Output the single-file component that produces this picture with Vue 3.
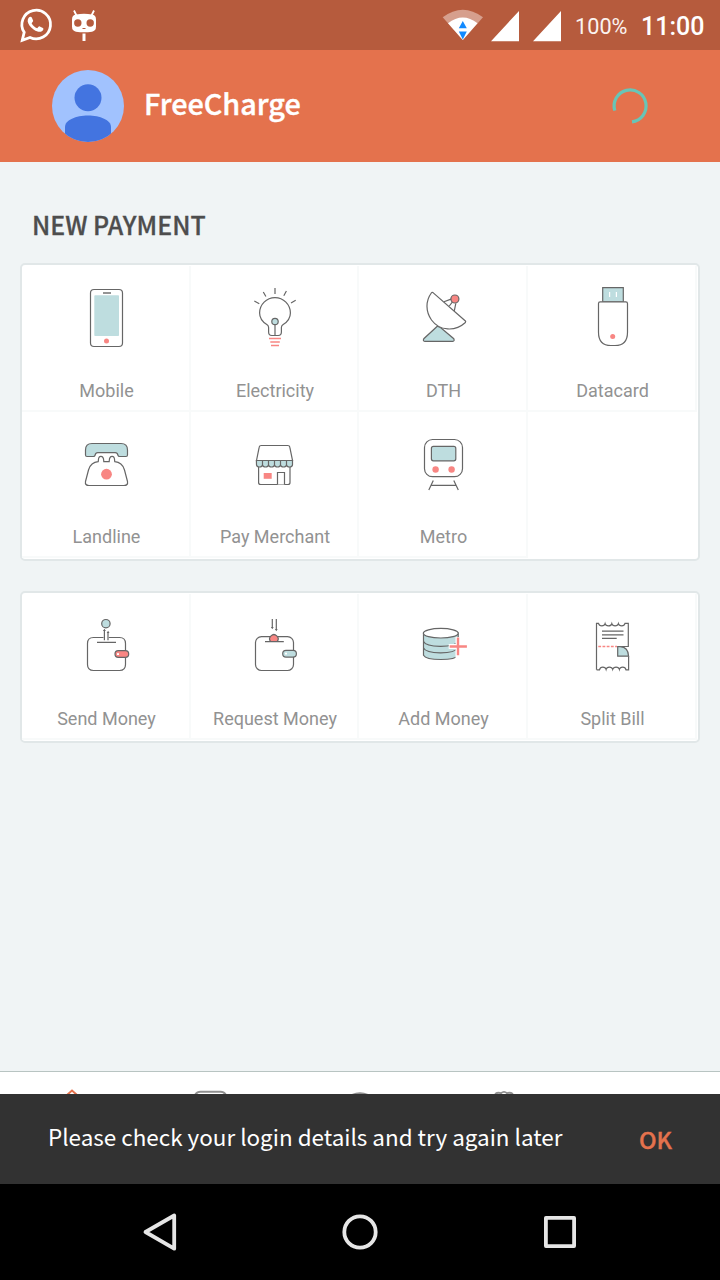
<script setup>
const quickPay = [
  { id: 'mobile', label: 'Mobile', box: '74 280 65 70' },
  { id: 'electricity', label: 'Electricity', box: '243 280 65 70' },
  { id: 'dth', label: 'DTH', box: '411 280 65 70' },
  { id: 'datacard', label: 'Datacard', box: '580 280 65 70' },
  { id: 'landline', label: 'Landline', box: '74 426 65 70' },
  { id: 'merchant', label: 'Pay Merchant', box: '243 426 65 70' },
  { id: 'metro', label: 'Metro', box: '411 426 65 70' },
]
const transfers = [
  { id: 'send', label: 'Send Money', box: '74 608 65 70' },
  { id: 'request', label: 'Request Money', box: '243 608 65 70' },
  { id: 'add', label: 'Add Money', box: '411 608 65 70' },
  { id: 'split', label: 'Split Bill', box: '580 608 65 70' },
]
const groups = [quickPay, transfers]
</script>

<template>
  <div class="screen">
    <div class="status">
      <svg class="notif" viewBox="0 0 110 50" width="110" height="50">
        <path d="M22.300 40.200 24.200 32.300A14.300 14.300 0 1 1 30 37.400Z" fill="none" stroke="#fff" stroke-width="2.800" />
        <path d="M28.500 18c1.200-1.500 2.800-1.500 3.400-.2l1.200 2.800c.2.700-.2 1.300-1.500 2.700 1.300 2.500 3.200 4.100 5.600 5 1.200-1.300 1.800-2.300 2.600-1.900l3.100 1.500c.9.500.5 2.200-.7 3.100-2.200 1.600-5 .8-8.300-1.300-3.500-2.300-5.800-5.600-6.200-8.200-.1-1.400.2-2.600.8-3.500Z" fill="#fff" />
        <path d="M74 10.500l2.500 5M94 10.500l-2.500 5" stroke="#fff" stroke-width="1.800" fill="none" />
        <path d="M82.500 33.500h3v7.500h-3z" fill="#fff" />
        <path d="M76 14.500q8-1.400 16 0 4 .7 4 5v7q0 4.500-4 5.200-8 1-16 0-4-.7-4-5.200v-7q0-4.300 4-5Z" fill="#fff" />
        <circle cx="77.800" cy="23" r="3.700" fill="#b65b3d" /><circle cx="90.200" cy="23" r="3.700" fill="#b65b3d" />
        <path d="M82.500 28.500h3" stroke="#b65b3d" stroke-width="1" />
      </svg>
      <svg class="signals" viewBox="440 0 124 50" width="124" height="50">
        <path d="M462.800 40 442.700 17.300Q462.800 2.200 483 17.300Z" fill="#d69f8d" />
        <path d="M462.800 40 448 23.300Q462.800 11.500 477.500 23.300Z" fill="#fff" />
        <path d="M462.800 21l4 7.300h-8zM458.800 31.500h8l-4 8z" fill="#118aff" />
        <path d="M491 41.200 519 11v30.200zM533 41.200 561 11v30.200z" fill="#fff" />
      </svg>
      <span class="battery">100%</span>
      <span class="clock">11:00</span>
    </div>

    <header class="header">
      <svg class="avatar" viewBox="52 70 72 72" width="72" height="72">
        <clipPath id="face"><circle cx="88" cy="106" r="36" /></clipPath>
        <g clip-path="url(#face)">
          <path d="M52 70h72v72H52z" fill="#a1c2fe" />
          <circle cx="88" cy="97.700" r="13.500" fill="#4374e0" />
          <path d="M65 145V127C65 120 76 115.500 88 115.500S111 120 111 127v18Z" fill="#4374e0" />
        </g>
      </svg>
      <h1>FreeCharge</h1>
      <svg class="spinner" viewBox="610 86 40 40" width="40" height="40">
        <path d="M614.800 110.600A16 16 0 1 1 632 121.800" fill="none" stroke="#67c5b7" stroke-width="3.200" />
      </svg>
    </header>

    <main>
      <h2>NEW PAYMENT</h2>
      <section v-for="(group, g) in groups" :key="g" class="card">
        <div v-for="item in group" :key="item.id" class="cell">
          <svg class="icon" :viewBox="item.box" width="65" height="70">
            <g v-if="item.id === 'mobile'">
              <rect x="90.500" y="289.500" width="32" height="57" rx="3.500" />
              <rect class="teal flat" x="94.300" y="295.300" width="24.700" height="40.700" rx=".8" />
              <path d="M103 293h8" stroke-width="1.800" stroke="#888" />
              <circle class="red flat" cx="106.500" cy="341" r="2.500" />
            </g>
            <g v-else-if="item.id === 'electricity'">
              <path d="M268.600 332v-4.500q0-1.700-1.800-2.900C262 321.500 259.600 318 259.600 313A15.400 15.400 0 0 1 290.400 313C290.400 318 288 321.500 283.200 324.600q-1.800 1.200-1.800 2.900v4.500q0 3.500-3.200 3.500h-6.400q-3.200 0-3.200-3.500Z" />
              <path d="M275 325v10.500M275 288v6M263.300 292l2.600 4.500M254.300 301l5 2.700M286.400 291l-2.600 4.700M295.700 300.300l-4.700 2.700" />
              <circle class="teal" cx="275" cy="321.500" r="3.200" />
              <path class="redline" d="M269 338.500h12M270.300 342h9.500M271 345.500h8" stroke-width="1.400" />
            </g>
            <g v-else-if="item.id === 'dth'">
              <path class="teal" d="M437.300 326.300 423.800 338.700q-1.200 2.600 1 2.600h28q2 0 1-2.600L440.500 327.500Z" />
              <path d="M444 301.800l7-2.700M449.300 306l3.200-4.200M454.300 310.800l1.500-7.500" />
              <path d="M433 292.600 465.400 321q.6.700 0 1.500C455 332 439.500 331 431.500 320 425.500 311.500 425.500 301 431.300 293q.7-1 1.700-.4Z" />
              <circle class="red" cx="454.900" cy="299" r="4" />
            </g>
            <g v-else-if="item.id === 'datacard'">
              <path class="teal" d="M602.700 287.600h20.600v14.200h-20.600z" />
              <path d="M609.600 292v5M616.400 292v5" stroke="#fff" stroke-width="1.200" />
              <path d="M600.200 301.800h25.600q1.700 0 1.700 1.700v28.700q0 13.300-12.500 13.300h-4q-12.500 0-12.500-13.300v-28.700q0-1.700 1.700-1.700Z" />
              <circle class="red flat" cx="612.700" cy="336.400" r="2.500" />
            </g>
            <g v-else-if="item.id === 'landline'">
              <path class="teal" d="M85.500 455v-5q0-6.500 6.500-6.500h29q6.500 0 6.500 6.500v5q0 1.500-1.500 1.500h-6.500q-1.200 0-1.700-1.500-.4-2.300-2.500-2.300h-17.600q-2.100 0-2.500 2.300-.5 1.500-1.700 1.500h-6.500q-1.500 0-1.500-1.500Z" />
              <path d="M98.200 461.700c.5-1.500-.5-5.300 2.700-5.300s2.700 3.800 2.900 5.300h5.400c.2-1.500-.3-5.300 2.900-5.300s2.200 3.800 2.700 5.300c5.700.3 8.200 3.300 9.700 8.300l3 11.500q.7 4-3.500 4H89q-4.200 0-3.500-4l3-11.500c1.500-5 4-8 9.700-8.300Z" />
              <circle class="red flat" cx="106.500" cy="474.200" r="5.400" />
            </g>
            <g v-else-if="item.id === 'merchant'">
              <path d="M258.600 467v15.500q0 2 2 2h27.400q2 0 2-2V467" />
              <path d="M256.500 460.500 259.200 447.200q.3-1.700 2-1.700h26.600q1.700 0 2 1.700l2.700 13.300Z" />
              <path class="teal" d="M256.400 460.500h36.100v4.300q-.4 2.200-3 2.200t-3-2.200q-.4 2.200-3 2.200t-3-2.200q-.4 2.200-3 2.200t-3-2.200q-.4 2.200-3 2.200t-3-2.200q-.4 2.200-3 2.200t-3-2.200q-.4 2.200-3 2.200t-3-2.200ZM262.500 460.500v4.300M268.500 460.500v4.300M274.500 460.500v4.300M280.500 460.500v4.300M286.500 460.500v4.300" />
              <path class="red flat" d="M263.700 473h8v5.800h-8z" />
              <path d="M277.500 484.500v-12h7v12" />
            </g>
            <g v-else-if="item.id === 'metro'">
              <rect x="424.500" y="439.500" width="38" height="37.200" rx="8" />
              <rect class="teal" x="431.400" y="446.400" width="24.400" height="14.400" rx="2" />
              <circle class="red flat" cx="435.600" cy="469.500" r="3.200" /><circle class="red flat" cx="451.600" cy="469.500" r="3.200" />
              <path d="M433.300 480.500l-4.500 9.400M453.800 480.500l4.500 9.400M431.500 485.400h24.400" />
            </g>
            <g v-else-if="item.id === 'send'">
              <path d="M103.500 637.500H93.500q-6 0-6 6v21q0 6 6 6h26q6 0 6-6v-21q0-6-6-6h-10.700" />
              <path d="M97 642.400h19M104.400 640.300V630M108 640.300V632" />
              <path d="M102.900 631l1.500-2.200 1.500 2.200zM106.700 633l1.400-2.200 1.400 2.200z" class="dark" />
              <circle class="teal" cx="105.900" cy="623.700" r="4.200" />
              <rect class="red" x="115" y="650.700" width="13.700" height="6.700" rx="3.300" />
              <rect x="117" y="653.200" width="2" height="1.800" class="white" />
            </g>
            <g v-else-if="item.id === 'request'">
              <rect x="255.500" y="636.600" width="38" height="33.900" rx="6" />
              <path class="red" d="M270.600 641.500a4.200 4.200 0 1 1 6.600 0Z" />
              <path d="M265 641.700h18.800M272.300 619v9M276.300 619v11" />
              <path d="M270.900 627h2.800l-1.400 2.300zM274.900 629h2.800l-1.400 2.300z" class="dark" />
              <rect class="teal" x="282.700" y="650.400" width="13.700" height="6.700" rx="3.300" />
              <rect x="285" y="652.700" width="2" height="1.800" class="white" />
            </g>
            <g v-else-if="item.id === 'add'">
              <path class="teal" d="M423.500 633v22.300c3 5.600 31.500 5.600 34.700 0V633Z" />
              <path class="line" d="M423.500 641.500c3 6.200 30 6.600 34.700 0M423.500 648c3 6.200 30 6.600 34.700 0" />
              <ellipse cx="440.800" cy="633.200" rx="17.400" ry="4.800" />
              <path d="M448.700 646.500h18M458 637v21" stroke="#fff" stroke-width="5" />
              <path class="redline" d="M449.700 646.500h17.200M458 637.500v17.700" stroke-width="2.400" />
            </g>
            <g v-else>
              <path d="M596.500 669.800V623.300h2q.6 2.600 3.300 2.600t3.300-2.200q.6 2.200 3.300 2.200t3.400-2.200q.6 2.200 3.300 2.200t3.300-2.200q.6 2.200 3.300 2.200t3.300-2.600h3.300V646.500h-8" />
              <path d="M628.600 656.200v13.600h-2.600q-.6-2.600-3.300-2.600t-3.300 2.200q-.6-2.200-3.300-2.200t-3.400 2.200q-.6-2.200-3.300-2.200t-3.300 2.200q-.6-2.200-3.300-2.200t-3.300 2.600h-2.900" class="line" />
              <path d="M602 631.200h21.500M602 634.800h21.500M602 638.400h14.700" />
              <path class="redline" d="M598.300 646.500h18.700" stroke-width="1.400" stroke-dasharray="2.800 1.400" />
              <path class="teal" d="M617.700 646.600h2.500q8 .4 8.400 9.600h-10.900Z" />
            </g>
          </svg>
          <span class="label">{{ item.label }}</span>
        </div>
      </section>
    </main>

    <nav class="tabs">
      <svg viewBox="0 1072 720 22" width="720" height="22" fill="none" stroke="#8f8f8f">
        <path d="M67 1095l5-4.500 5 4.500" stroke="#e4724d" stroke-width="2" />
        <path d="M194.500 1096q2-4.300 6-4.300h20q4 0 6 4.300" stroke-width="2" />
        <path d="M351 1095.500q9-4.500 18 0" stroke-width="2" />
        <path d="M495 1094q3-2 6-.8 3-2.600 6 0 3-1.200 6 .8" stroke-width="1.800" />
      </svg>
    </nav>

    <div class="snackbar">
      <span class="message">Please check your login details and try again later</span>
      <span class="ok">OK</span>
    </div>

    <footer class="softkeys">
      <svg viewBox="0 1184 720 96" width="720" height="96" fill="none" stroke="#e6e6e6" stroke-width="3.800" stroke-linejoin="round">
        <path d="M145.500 1232 174.200 1215.500v33.200Z" />
        <circle cx="360" cy="1232" r="15.700" />
        <rect x="545.900" y="1217.900" width="28.200" height="28.200" />
      </svg>
    </footer>
  </div>
</template>

<style>
body {
  background: #f0f4f5;
}
</style>

<style scoped>
.screen {
  width: 720px;
  height: 1280px;
  display: flex;
  flex-direction: column;
  overflow: hidden;
  background: #f0f4f5;
  font-family: Roboto, "Liberation Sans", sans-serif;
}
svg {
  display: block;
  flex: none;
}
.status {
  height: 50px;
  flex: none;
  display: flex;
  align-items: center;
  background: #b65b3d;
  color: #fff;
  white-space: nowrap;
}
.signals {
  margin-left: 330px;
}
.battery {
  width: 66px;
  margin-left: 11px;
  font-size: 21.7px;
  line-height: 30px;
  padding-top: 3px;
  color: #fbf3f0;
}
.clock {
  font-size: 25px;
  line-height: 30px;
  padding-top: 4px;
  font-weight: 500;
}
.header {
  height: 112px;
  flex: none;
  display: flex;
  align-items: center;
  padding: 0 70px 0 52px;
  background: #e4724d;
}
h1 {
  flex: 1;
  margin: 0 0 7px 20px;
  color: #fff;
  font: 500 28.8px/44px "Noto Sans CJK SC", sans-serif;
  -webkit-text-stroke: 0.4px #fff;
}
main {
  flex: 1;
  padding: 42px 20px 0;
}
h2 {
  margin: 0 0 19px 12px;
  color: #4d4d4d;
  font: 500 24.9px/40px "Noto Sans CJK SC", sans-serif;
  -webkit-text-stroke: 0.3px #4d4d4d;
}
.card {
  box-sizing: border-box;
  width: 680px;
  margin-bottom: 30px;
  padding: 1px 0;
  display: grid;
  grid-template-columns: 169px 168px 169px 169px;
  grid-auto-rows: 146px;
  border: 2px solid #e1e7e8;
  border-radius: 5px;
  background: #fff;
}
.cell {
  display: flex;
  flex-direction: column;
  padding-top: 14px;
  box-shadow: inset -2px -2px #f8fafa;
}
.icon {
  margin-left: 52px;
  fill: #fff;
  stroke: #666;
  stroke-width: 1.2;
}
.line {
  fill: none;
}
.teal {
  fill: #bedddf;
}
.red {
  fill: #f88683;
}
.redline {
  fill: none;
  stroke: #f88683;
}
.flat {
  stroke: none;
}
.dark {
  fill: #666;
  stroke: none;
}
.white {
  fill: #fff;
  stroke: none;
}
.label {
  margin-top: 29px;
  text-align: center;
  color: #929292;
  font-size: 18px;
  line-height: 24px;
  white-space: nowrap;
}
.tabs {
  height: 22px;
  flex: none;
  border-top: 1px solid #b8c4c2;
  background: #fff;
}
.snackbar {
  height: 90px;
  flex: none;
  display: flex;
  align-items: center;
  justify-content: space-between;
  padding: 0 48px;
  background: #323232;
}
.message {
  margin-bottom: 6px;
  color: #fff;
  font: 400 22.45px/36px "Noto Sans CJK SC", sans-serif;
  white-space: nowrap;
}
.ok {
  color: #e4724d;
  font: 500 23.3px/36px "Noto Sans CJK SC", sans-serif;
  -webkit-text-stroke: 0.4px #e4724d;
}
.softkeys {
  height: 96px;
  flex: none;
  background: #000;
}
</style>
